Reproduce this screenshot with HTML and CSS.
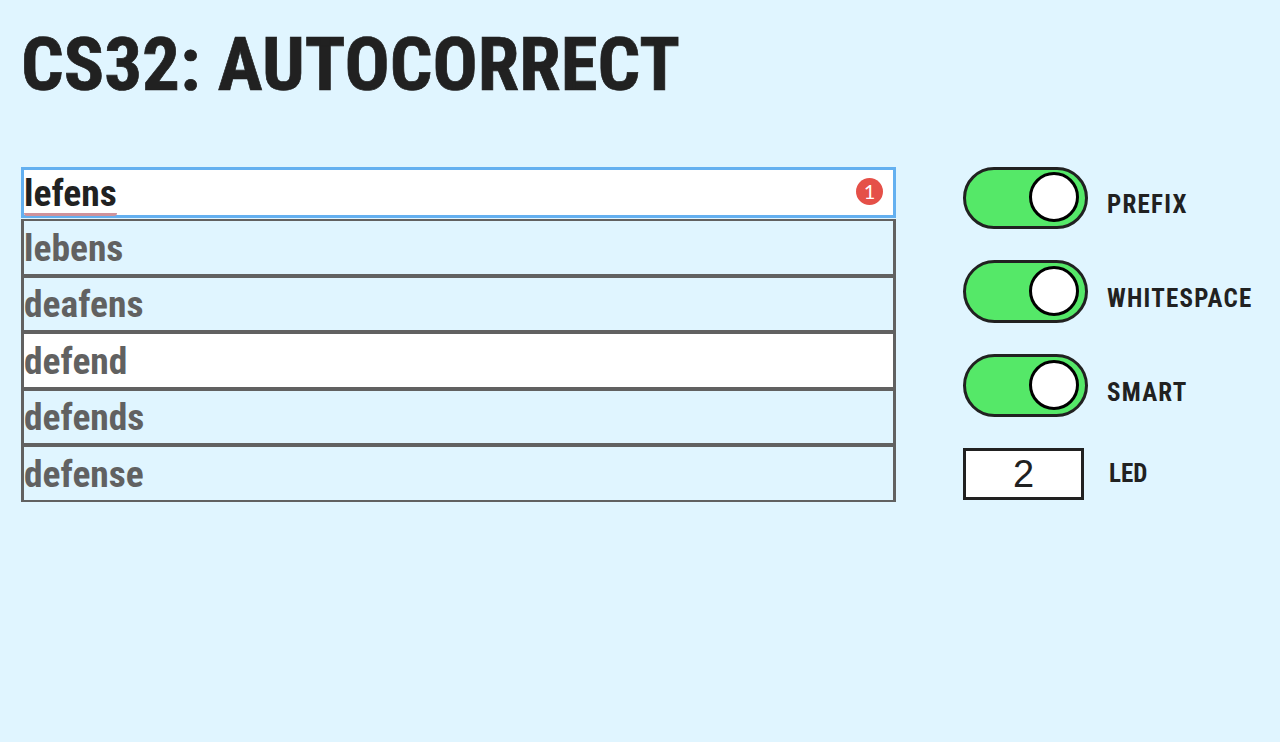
FILE: index.html
```html
<!DOCTYPE html>
<html lang="en">
<head>
<meta charset="utf-8">
<title>CS32: Autocorrect</title>
<link rel="stylesheet" href="styles.css">
</head>
<body>
<h1 class="title">CS32: AUTOCORRECT</h1>
<main class="layout">
  <section class="search">
    <div class="field"><span class="word typed">lefens</span><span class="count">1</span></div>
    <ul class="suggestions">
      <li class="item"><span class="word">lebens</span></li>
      <li class="item"><span class="word">deafens</span></li>
      <li class="item active"><span class="word">defend</span></li>
      <li class="item"><span class="word">defends</span></li>
      <li class="item"><span class="word">defense</span></li>
    </ul>
  </section>
  <section class="options">
    <div class="option"><span class="switch"><span class="knob"></span></span><span class="label">PREFIX</span></div>
    <div class="option"><span class="switch"><span class="knob"></span></span><span class="label">WHITESPACE</span></div>
    <div class="option"><span class="switch"><span class="knob"></span></span><span class="label">SMART</span></div>
    <div class="option"><span class="number">2</span><span class="label tight">LED</span></div>
  </section>
</main>
</body>
</html>
```
FILE: styles.css
```css
* { box-sizing: border-box; }
body {
  margin: 0;
  min-height: 742px;
  padding: 20px 0 0 21px;
  background: #e0f5ff;
  color: #212121;
  font-family: "Roboto Condensed", Roboto, sans-serif;
  font-stretch: condensed;
  font-weight: 700;
  overflow: hidden;
}
.title {
  margin: 0;
  height: 147px;
  font-size: 75px;
  line-height: 88px;
  -webkit-text-stroke: 0.7px #212121;
}
.layout { display: flex; gap: 67px; }
.search { width: 875px; }
.field {
  display: flex;
  justify-content: space-between;
  height: 51px;
  border: 3px solid #64b0f0;
  background: #fff;
}
.word {
  font-size: 37.5px;
  line-height: 46px;
  white-space: nowrap;
}
.typed {
  height: 46px;
  border-radius: 3px;
  background: linear-gradient(#cf939c, #cf939c) 0 43px / 100% 3px no-repeat;
}
.count {
  width: 27px;
  height: 27px;
  margin: 8px 10px 0 0;
  border-radius: 50%;
  background: #e55048;
  color: #fff;
  font: 400 20px/27px Lato, sans-serif;
  text-align: center;
}
.suggestions { list-style: none; margin: 1px 0 0; padding: 0; color: #616161; }
.item { height: 56.5px; border: 2px solid #616161; border-width: 2px 3px; padding-top: 3.8px; }
.active { background: #fff; }
.options { margin-top: -0.5px; }
.option { display: flex; height: 93.75px; }
.switch {
  width: 125px;
  height: 62.5px;
  border: 3px solid #212121;
  border-radius: 32px;
  background: #55e868;
  padding: 2px 6px;
  display: flex;
  justify-content: flex-end;
}
.option:nth-child(2) .switch,
.option:nth-child(3) .switch { padding-top: 3px; }
.knob { width: 50px; height: 50px; border: 3px solid #000; border-radius: 50%; background: #fff; }
.label {
  margin: 23.5px 0 0 19px;
  font-size: 25px;
  line-height: 30px;
  letter-spacing: 1.25px;
}
.number {
  width: 121px;
  height: 52px;
  border: 3px solid #212121;
  background: #fff;
  font: 400 38px/46px "Liberation Sans", sans-serif;
  text-align: center;
}
.tight { margin: 11px 0 0 25px; letter-spacing: 0; }
```
